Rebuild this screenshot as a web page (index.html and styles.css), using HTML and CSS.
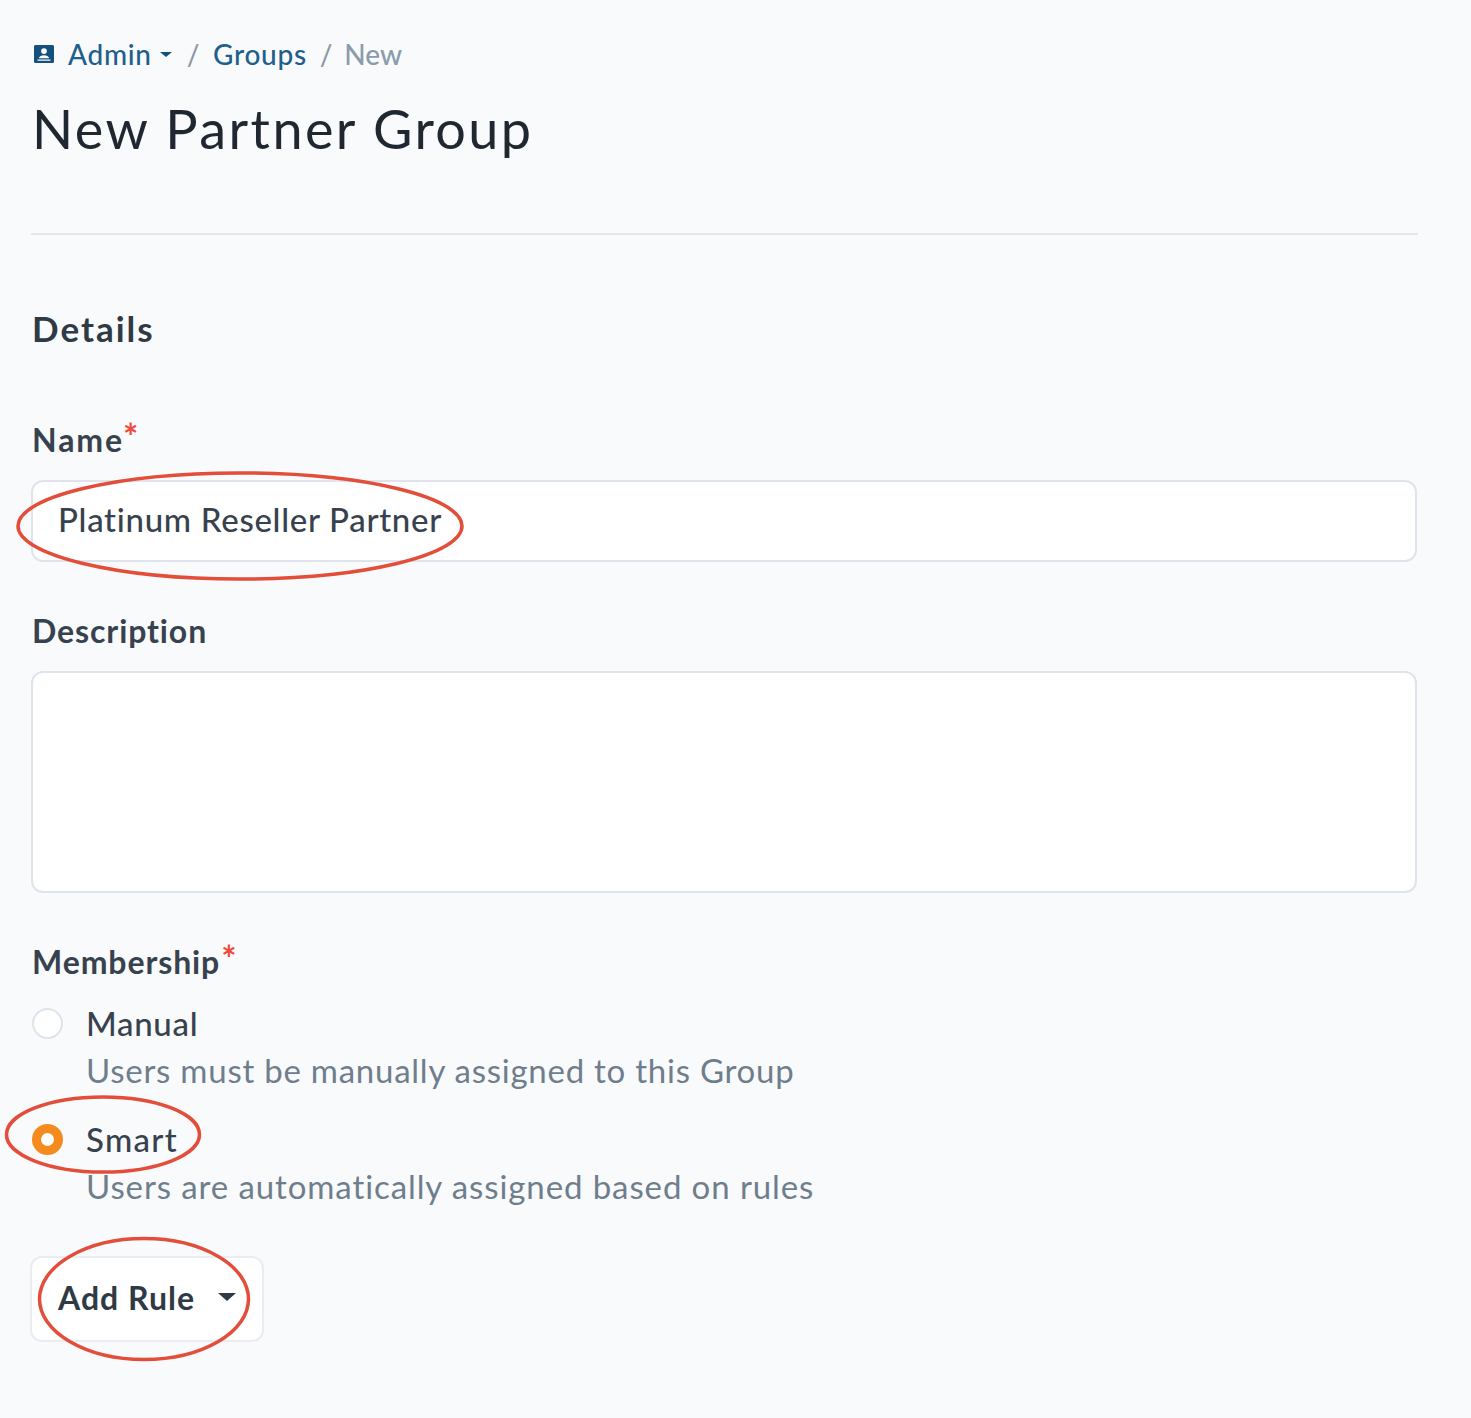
FILE: index.html
```html
<!DOCTYPE html>
<html lang="en">
<head>
<meta charset="utf-8">
<title>New Partner Group</title>
<link rel="stylesheet" href="styles.css">
</head>
<body>
<main class="page">
  <nav class="crumbs">
    <svg class="crumb-icon" viewBox="0 0 20 18" aria-hidden="true"><path fill-rule="evenodd" d="M0 1.5A1.5 1.5 0 0 1 1.5 0h17A1.5 1.5 0 0 1 20 1.5v15a1.5 1.5 0 0 1-1.5 1.500h-17A1.500 1.500 0 0 1 0 16.500zM10 3.200a2.900 2.900 0 1 0 0 5.800 2.900 2.900 0 0 0 0-5.800zM4.800 13.200c.5-2 2.600-3 5.200-3s4.700 1 5.200 3zM3.500 14.500v1.200h13v-1.200z"/></svg>
    <a class="crumb-link">Admin</a>
    <span class="caret caret-small"></span>
    <span class="sep sep-first">/</span>
    <a class="crumb-link">Groups</a>
    <span class="sep sep-last">/</span>
    <span class="crumb-current">New</span>
  </nav>
  <h1 class="title">New Partner Group</h1>
  <hr class="rule">
  <h2 class="section">Details</h2>

  <label class="label label-name">Name<sup class="req">*</sup></label>
  <div class="field field-input">Platinum Reseller Partner</div>

  <label class="label label-desc">Description</label>
  <div class="field field-area"></div>

  <label class="label label-member">Membership<sup class="req">*</sup></label>
  <div class="option">
    <span class="radio"></span>
    <div class="option-text">
      <div class="option-name">Manual</div>
      <div class="option-hint">Users must be manually assigned to this Group</div>
    </div>
  </div>
  <div class="option">
    <span class="radio radio-on"></span>
    <div class="option-text">
      <div class="option-name option-name-smart">Smart</div>
      <div class="option-hint option-hint-wide">Users are automatically assigned based on rules</div>
    </div>
  </div>
  <button class="add-rule" type="button">Add Rule<span class="caret"></span></button>
</main>
<svg class="marks" viewBox="0 0 1471 1418" aria-hidden="true">
  <ellipse cx="240" cy="526" rx="222" ry="53"/>
  <ellipse cx="103" cy="1134.500" rx="96.500" ry="37.500"/>
  <ellipse cx="144" cy="1299" rx="104.500" ry="60.500"/>
</svg>
</body>
</html>
```

FILE: styles.css
```css
* { box-sizing: border-box; }
html, body { margin: 0; padding: 0; }
body {
  position: relative;
  height: 1418px;
  overflow: hidden;
  background: #f9fafc;
  color: #2f3a45;
  font-family: "Lato", "Open Sans", sans-serif;
}
.page { padding: 37px 53px 0 32px; }

.crumbs { display: flex; align-items: center; height: 34px; font-size: 28px; letter-spacing: 0.7px; font-weight: 500; }
.crumb-icon { width: 20px; height: 18px; fill: #14507c; margin: 0 14px 0 2px; }
.crumb-link { color: #1f5f8b; }
.crumb-current { color: #8b9bab; letter-spacing: 0; }
.sep { color: #8b9bab; margin: 0 13px; }
.sep-first { margin-left: 15px; }
.sep-last { margin-right: 11px; }
.caret {
  display: inline-block;
  width: 0; height: 0;
  border-left: 9px solid transparent;
  border-right: 9px solid transparent;
  border-top: 8px solid #2f3a45;
  margin-left: 23px;
  vertical-align: 9px;
}
.caret-small {
  border-left-width: 6px;
  border-right-width: 6px;
  border-top: 5px solid #14507c;
  margin-left: 8px;
}

.title { margin: 26px 0 0; font-size: 54px; line-height: 64px; letter-spacing: 2.4px; font-weight: 400; color: #1f2730; }
.rule { margin: 72px 0 0 -1px; border: 0; border-top: 2px solid #e4e7ea; }
.section { margin: 71px 0 0; font-size: 35px; line-height: 44px; letter-spacing: 2px; font-weight: 700; color: #2f3a45; }

.label { display: block; font-size: 32px; line-height: 40px; letter-spacing: 0.9px; font-weight: 700; color: #37424e; }
.label-name { margin-top: 70px; letter-spacing: 1.9px; }
.label-desc { margin-top: 49px; }
.label-member { margin-top: 49px; }
.req { color: #ef4a3c; font-size: 36px; font-weight: 700; line-height: 0; vertical-align: 2px; margin-left: 1px; }
.label-name .req { margin-left: -1px; }

.field {
  margin: 20px 1px 0 -1px;
  background: #fff;
  border: 2px solid #dfe4ec;
  border-radius: 12px;
}
.field-input { height: 82px; padding: 0 25px; font-size: 33px; letter-spacing: 0.7px; font-weight: 500; line-height: 74px; color: #37424e; }
.field-area { height: 222px; }

.option { display: flex; gap: 23px; margin-top: 20px; }
.option + .option { margin-top: 25px; }
.radio {
  flex: none;
  width: 31px; height: 31px;
  margin-top: 6px;
  border-radius: 50%;
  background: #fff;
  border: 2px solid #dfe4ec;
}
.radio-on { border: 9px solid #f58a1f; }
.option-name { font-size: 33px; letter-spacing: 0.7px; font-weight: 500; line-height: 42px; color: #37424e; }
.option-name-smart { letter-spacing: 1.3px; }
.option-hint { margin-top: 3px; font-size: 33px; letter-spacing: 0.75px; line-height: 46px; color: #6f7e8c; }
.option-hint-wide { letter-spacing: 0.9px; }

.add-rule {
  display: block;
  width: 234px; height: 86px;
  margin: 47px 0 0 -2px;
  padding: 0 0 3px 26px;
  text-align: left;
  background: #fff;
  border: 2px solid #e9ecf0;
  border-radius: 12px;
  font: 700 32px "Lato", sans-serif;
  letter-spacing: 1px;
  color: #2f3a45;
}

.marks { position: absolute; left: 0; top: 0; width: 1471px; height: 1418px; pointer-events: none; }
.marks ellipse { fill: none; stroke: #e34e3a; stroke-width: 3.500; }
```
